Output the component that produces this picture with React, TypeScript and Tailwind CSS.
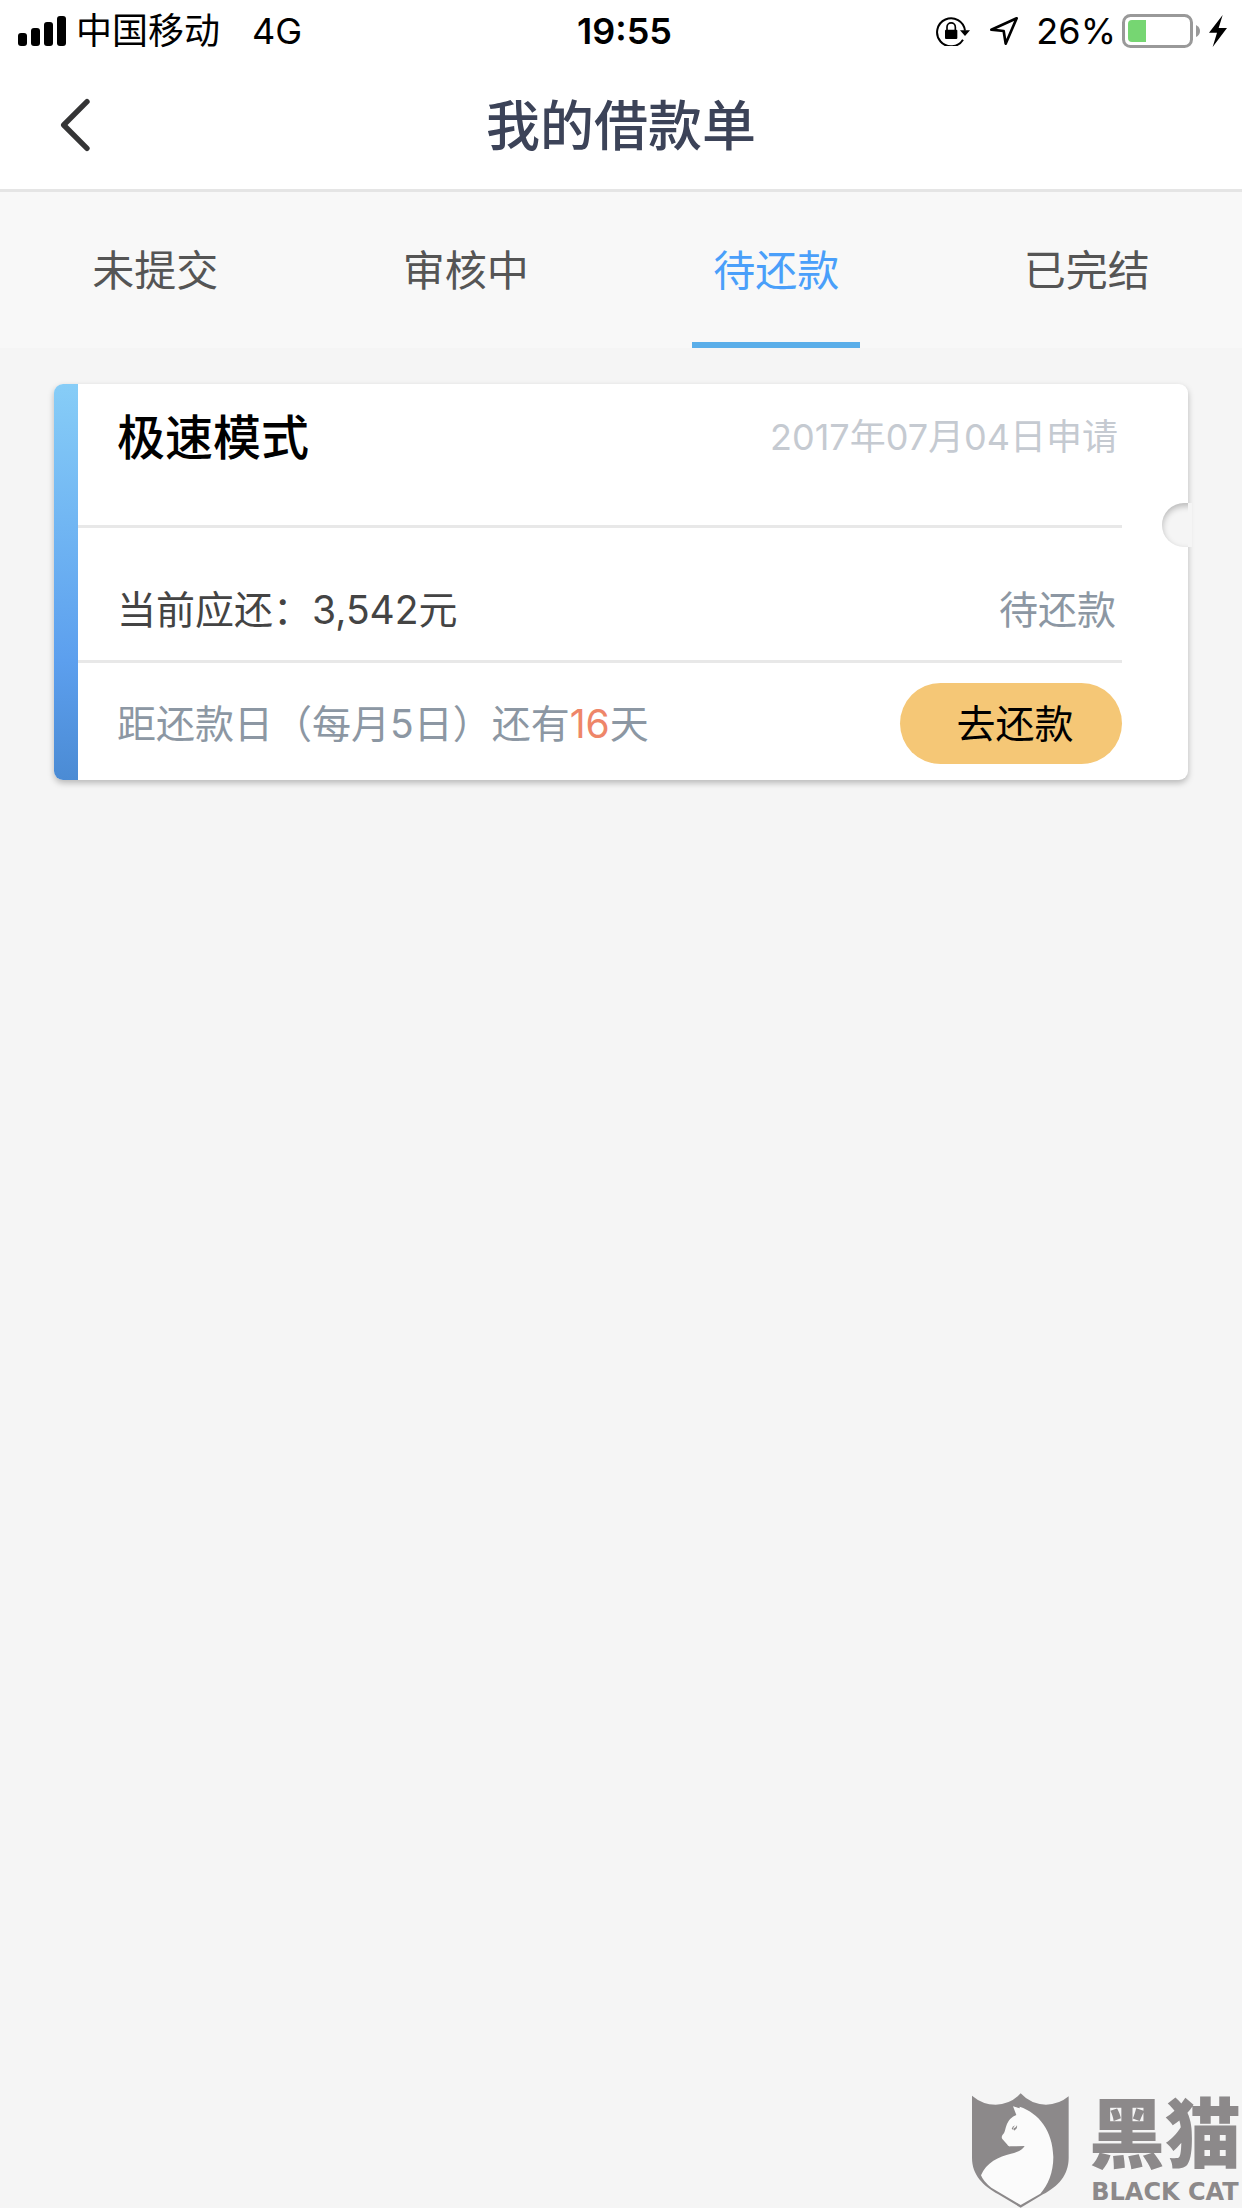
import type { ReactNode } from "react";

const tabs = ["未提交", "审核中", "待还款", "已完结"];

function SignalIcon() {
  return (
    <svg className="h-[30px] w-12" viewBox="0 0 48 30" aria-hidden="true">
      <rect x="0" y="17" width="9" height="13" rx="3" />
      <rect x="13" y="12" width="9" height="18" rx="3" />
      <rect x="26" y="6" width="9" height="24" rx="3" />
      <rect x="39" y="0" width="9" height="30" rx="3" />
    </svg>
  );
}

function RotationLockIcon() {
  return (
    <svg className="h-[30px] w-[34px]" viewBox="0 0 102 90" aria-hidden="true">
      <path
        d="M81 71A42 42 0 1 1 87 44"
        fill="none"
        stroke="black"
        strokeWidth="6"
      />
      <path d="M72 43H102L87 60Z" />
      <rect x="27" y="41" width="37" height="28" rx="3" />
      <path
        d="M33 42V33a12.500 12.500 0 0 1 25 0V42"
        fill="none"
        stroke="black"
        strokeWidth="5"
      />
    </svg>
  );
}

function LocationIcon() {
  return (
    <svg className="h-[28px] w-[28px]" viewBox="0 0 84 84" aria-hidden="true">
      <path
        d="M80 4L47 80L41 42L4 38Z"
        fill="none"
        stroke="black"
        strokeWidth="8"
        strokeLinejoin="round"
      />
    </svg>
  );
}

function BatteryIcon() {
  return (
    <svg className="h-[34px] w-[79px]" viewBox="0 0 79 34" aria-hidden="true">
      <rect
        x="1.500"
        y="1.500"
        width="68"
        height="31"
        rx="7"
        fill="none"
        stroke="#999999"
        strokeWidth="3"
      />
      <path d="M24 6H10Q6 6 6 10V24Q6 28 10 28H24Z" fill="#76d672" />
      <path d="M74 11Q78 13 78 17T74 23Z" fill="#999999" />
    </svg>
  );
}

function BoltIcon() {
  return (
    <svg className="h-8 w-[18px]" viewBox="0 0 54 96" aria-hidden="true">
      <path d="M41 0L0 53H24L11 96L54 39H29Z" />
    </svg>
  );
}

function ShieldCatLogo() {
  return (
    <svg
      className="h-[115px] w-[97px]"
      viewBox="64 68 291 345"
      aria-hidden="true"
    >
      <path
        d="M64 76Q96 103 135 103Q180 102 210 69Q240 102 286 103Q324 103 354 78V262C354 315 322 348 277 372L210 412L143 372C98 346 64 315 64 262Z"
        fill="#8c898a"
      />
      <path
        d="M187 108L207 114V109C265 129 306 180 308 260C308 306 292 345 269 370L210 404L122 352Q98 334 91 315C106 277 145 258 181 250C205 245 216 237 222 227L179 228Q172 229 169 222L155 206Q151 200 156 193C164 186 163 175 169 161Q177 142 197 134Z"
        fill="#fbfbfb"
      />
      <path d="M183 175Q185 167 194 165Q186 170 189 180Z" fill="#8c898a" />
      <path d="M190 181Q201 176 199 165Q196 173 190 174Z" fill="#8c898a" />
    </svg>
  );
}

function StatusBar() {
  return (
    <div className="grid h-[60px] grid-cols-[1fr_auto_1fr] items-center pt-[2px] pr-[15px] pl-[18px] text-4xl leading-none text-black">
      <div className="flex items-center">
        <SignalIcon />
        <span className="ml-[10px]">中国移动</span>
        <span className="ml-8">4G</span>
      </div>
      <time className="pl-1 font-semibold">19:55</time>
      <div className="flex items-center justify-end">
        <RotationLockIcon />
        <span className="ml-5 flex">
          <LocationIcon />
        </span>
        <span className="ml-[18px]">26%</span>
        <span className="ml-[6px] flex">
          <BatteryIcon />
        </span>
        <span className="ml-2 flex">
          <BoltIcon />
        </span>
      </div>
    </div>
  );
}

function CardRow({
  children,
  divided = false,
  className = "",
}: {
  children: ReactNode;
  divided?: boolean;
  className?: string;
}) {
  return (
    <div
      className={
        "mr-[66px] flex justify-between pl-[39px] leading-none " +
        (divided ? "border-b-[3px] border-[#e8e8e8] " : "") +
        className
      }
    >
      {children}
    </div>
  );
}

function LoanCard() {
  return (
    <article className="relative mx-[54px] mt-9 flex rounded-[9px] bg-white shadow-[0_3px_6px_rgba(0,0,0,0.25)]">
      <div className="w-6 shrink-0 rounded-l-[9px] bg-linear-to-b from-[#87cdf7] via-[#5c9fee] via-70% to-[#4b8bd4]" />
      <div className="min-w-0 flex-1">
        <CardRow divided className="h-36 items-start pt-[30px]">
          <h2 className="text-5xl leading-none font-medium text-black">
            极速模式
          </h2>
          <span className="pt-[5px] pr-1 text-4xl leading-none text-[#c5cad1]">
            2017年07月04日申请
          </span>
        </CardRow>
        <CardRow
          divided
          className="h-[135px] items-end pb-[31px] text-[39px] text-[#444444]"
        >
          <span>当前应还：3,542元</span>
          <span className="pr-[6px] text-[#8c97a3]">待还款</span>
        </CardRow>
        <CardRow className="h-[117px] items-center pt-1 text-[39px] text-[#8c97a3]">
          <p>
            距还款日（每月5日）还有<span className="text-[#ee8669]">16</span>天
          </p>
          <button
            type="button"
            className="h-[81px] w-[222px] rounded-full bg-[#f5c776] pl-2 text-black"
          >
            去还款
          </button>
        </CardRow>
      </div>
      <div className="absolute top-[119px] -right-1 h-11 w-[30px] overflow-hidden">
        <div className="h-11 w-16 rounded-l-full bg-[#f5f5f5] shadow-[inset_0_3px_6px_rgba(0,0,0,0.25)]" />
        <div className="absolute top-0 right-0 h-full w-1 bg-[#f5f5f5]" />
      </div>
    </article>
  );
}

export default function App() {
  return (
    <div className="flex min-h-screen flex-col bg-[#f5f5f5] font-[Inter,'Noto_Sans_CJK_SC',sans-serif]">
      <header className="border-b-[3px] border-[#e5e5e5] bg-white">
        <StatusBar />
        <div className="grid h-[129px] grid-cols-[1fr_auto_1fr] items-center">
          <button
            type="button"
            aria-label="返回"
            className="ml-[60px] flex w-fit"
          >
            <svg className="h-[54px] w-[30px]" viewBox="0 0 90 162">
              <path
                d="M81 11L11 81L81 151"
                fill="none"
                stroke="#353536"
                strokeWidth="16"
                strokeLinecap="round"
                strokeLinejoin="round"
              />
            </svg>
          </button>
          <h1 className="pt-[5px] text-[54px] leading-none font-medium text-[#3c4358]">
            我的借款单
          </h1>
        </div>
      </header>
      <nav className="grid grid-cols-4 bg-[#f8f8f8]">
        {tabs.map((tab) => {
          const active = tab === "待还款";
          return (
            <button
              key={tab}
              type="button"
              aria-current={active ? "page" : undefined}
              className={
                "mx-auto h-[156px] w-[168px] border-b-[6px] pt-2 text-[42px] leading-none " +
                (active
                  ? "border-[#5aaee9] text-[#4a9ffa]"
                  : "border-transparent text-[#555555]")
              }
            >
              {tab}
            </button>
          );
        })}
      </nav>
      <main>
        <LoanCard />
      </main>
      <footer className="mt-auto flex items-end justify-end pr-px text-[#8c898a]">
        <ShieldCatLogo />
        <div className="ml-5 flex flex-col items-center pb-1">
          <span className="text-[76px] leading-none font-black">黑猫</span>
          <span className="mt-2 font-['DejaVu_Sans',sans-serif] text-2xl leading-none font-bold whitespace-nowrap">
            BLACK CAT
          </span>
        </div>
      </footer>
    </div>
  );
}
